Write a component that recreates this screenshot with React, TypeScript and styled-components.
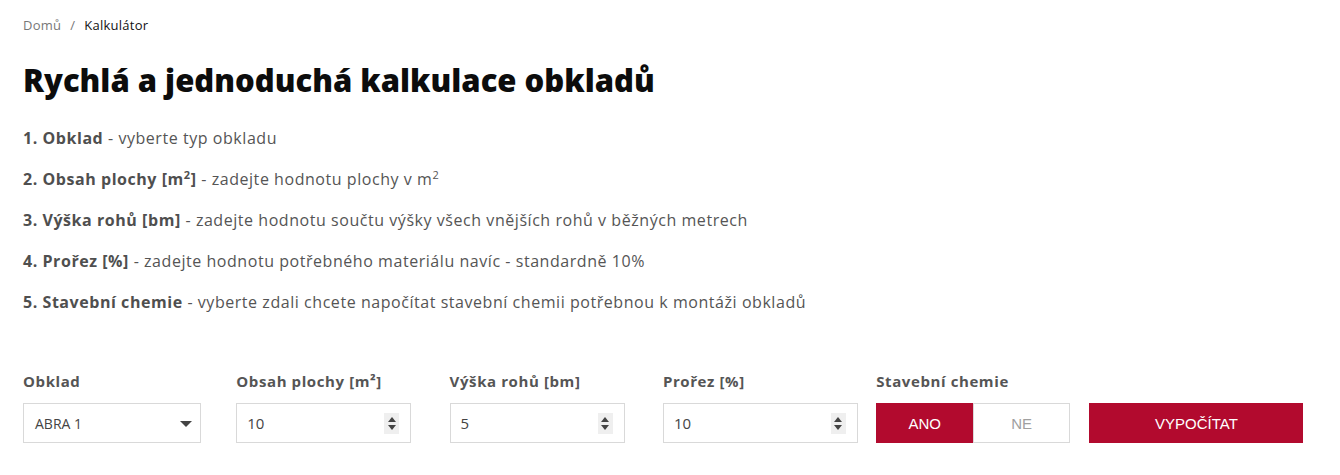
import React from "react";
import styled, { createGlobalStyle } from "styled-components";

const Global = createGlobalStyle`
  html, body { margin: 0; padding: 0; background: #fff; }
  body { font-family: "Open Sans", "Noto Sans", sans-serif; color: #555; }
  * { box-sizing: border-box; }
`;

const RED = "#b20a2e";

const Page = styled.div`
  padding: 16px 23px 0 23px;
`;

const Breadcrumb = styled.nav`
  display: flex;
  align-items: center;
  gap: 9px;
  font-size: 13px;
  line-height: 18px;
  letter-spacing: 0.25px;
`;

const Crumb = styled.span<{ $current?: boolean }>`
  color: ${(p) => (p.$current ? "#111" : "#777")};
`;

const Title = styled.h1`
  margin: 26px 0 0 0;
  font-size: 31px;
  line-height: 40px;
  font-weight: 800;
  color: #0c0c0c;
  letter-spacing: 0;
`;

const Steps = styled.div`
  margin-top: 26px;
  display: flex;
  flex-direction: column;
  gap: 17px;
`;

const Step = styled.p`
  margin: 0;
  font-size: 16px;
  line-height: 24px;
  letter-spacing: 0.55px;
  color: #555;
  strong { font-weight: 700; color: #4f4f4f; }
  sup { font-size: 11px; line-height: 0; vertical-align: 6px; }
`;

const Form = styled.div`
  margin-top: 57px;
  display: grid;
  grid-template-columns: repeat(6, 213.3px);
`;

const Field = styled.div<{ $w: number }>`
  width: ${(p) => p.$w}px;
  display: flex;
  flex-direction: column;
  gap: 12px;
`;

const Label = styled.label`
  font-size: 15px;
  line-height: 20px;
  font-weight: 700;
  letter-spacing: 0.6px;
  color: #555;
`;

const Box = styled.div`
  height: 40px;
  border: 1px solid #d9d9d9;
  background: #fff;
  display: flex;
  align-items: center;
  justify-content: space-between;
  padding: 0 8px 0 10px;
  font-size: 15px;
  color: #444;
`;

const SelectBox = styled(Box)`
  padding: 0 8px 0 11px;
  font-size: 14px;
`;

const Caret = styled.span`
  width: 0;
  height: 0;
  border-left: 6px solid transparent;
  border-right: 6px solid transparent;
  border-top: 6px solid #444;
  margin-top: 2px;
`;

const Spinner = styled.span`
  width: 15px;
  height: 21px;
  background: #efefef;
  display: flex;
  flex-direction: column;
  align-items: center;
  justify-content: center;
  gap: 3px;
  margin-right: 3px;
`;

const Arrow = styled.span<{ $up?: boolean }>`
  width: 0;
  height: 0;
  border-left: 4px solid transparent;
  border-right: 4px solid transparent;
  ${(p) => (p.$up ? "border-bottom: 5px solid #444;" : "border-top: 5px solid #444;")}
`;

const Toggle = styled.div`
  display: flex;
  height: 40px;
`;

const ToggleBtn = styled.button<{ $active?: boolean }>`
  flex: 1;
  height: 40px;
  border: 1px solid ${(p) => (p.$active ? RED : "#d9d9d9")};
  background: ${(p) => (p.$active ? RED : "#fff")};
  color: ${(p) => (p.$active ? "#fff" : "#a0a0a0")};
  font-family: "Liberation Sans", Arial, sans-serif;
  font-size: 15px;
  padding: 0;
  cursor: pointer;
`;

const Submit = styled.button`
  height: 40px;
  border: none;
  background: ${RED};
  color: #fff;
  font-family: "Liberation Sans", Arial, sans-serif;
  font-size: 15px;
  cursor: pointer;
`;

export default function App() {
  return (
    <>
      <Global />
      <Page>
        <Breadcrumb>
          <Crumb>Domů</Crumb>
          <Crumb>/</Crumb>
          <Crumb $current>Kalkulátor</Crumb>
        </Breadcrumb>
        <Title>Rychlá a jednoduchá kalkulace obkladů</Title>
        <Steps>
          <Step>
            <strong>1. Obklad</strong> - vyberte typ obkladu
          </Step>
          <Step>
            <strong>
              2. Obsah plochy [m<sup>2</sup>]
            </strong>{" "}
            - zadejte hodnotu plochy v m<sup>2</sup>
          </Step>
          <Step>
            <strong>3. Výška rohů [bm]</strong> - zadejte hodnotu součtu výšky všech vnějších rohů v běžných metrech
          </Step>
          <Step>
            <strong>4. Prořez [%]</strong> - zadejte hodnotu potřebného materiálu navíc - standardně 10%
          </Step>
          <Step>
            <strong>5. Stavební chemie</strong> - vyberte zdali chcete napočítat stavební chemii potřebnou k montáži obkladů
          </Step>
        </Steps>
        <Form>
          <Field $w={178}>
            <Label>Obklad</Label>
            <SelectBox>
              <span>ABRA 1</span>
              <Caret />
            </SelectBox>
          </Field>
          <Field $w={175}>
            <Label>Obsah plochy [m²]</Label>
            <Box>
              <span>10</span>
              <Spinner>
                <Arrow $up />
                <Arrow />
              </Spinner>
            </Box>
          </Field>
          <Field $w={175}>
            <Label>Výška rohů [bm]</Label>
            <Box>
              <span>5</span>
              <Spinner>
                <Arrow $up />
                <Arrow />
              </Spinner>
            </Box>
          </Field>
          <Field $w={195}>
            <Label>Prořez [%]</Label>
            <Box>
              <span>10</span>
              <Spinner>
                <Arrow $up />
                <Arrow />
              </Spinner>
            </Box>
          </Field>
          <Field $w={194}>
            <Label>Stavební chemie</Label>
            <Toggle>
              <ToggleBtn $active>ANO</ToggleBtn>
              <ToggleBtn>NE</ToggleBtn>
            </Toggle>
          </Field>
          <Field $w={214}>
            <Label>&nbsp;</Label>
            <Submit>VYPOČÍTAT</Submit>
          </Field>
        </Form>
      </Page>
    </>
  );
}
